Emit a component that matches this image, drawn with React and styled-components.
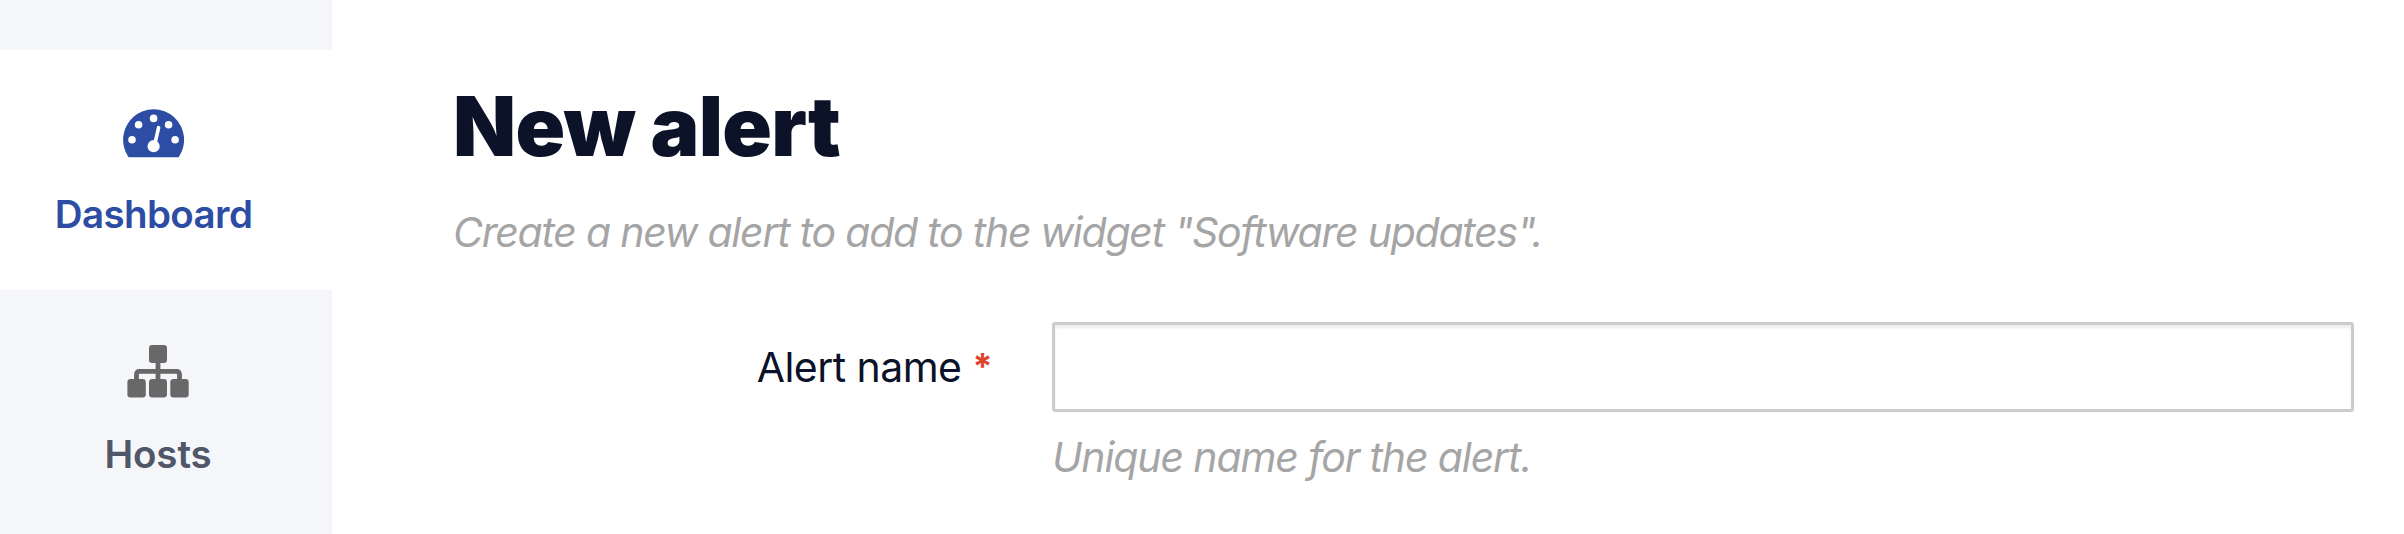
import React from "react";
import styled, { createGlobalStyle } from "styled-components";

const GlobalStyle = createGlobalStyle`
  *, *::before, *::after { box-sizing: border-box; }
  body { margin: 0; background: #fff; font-family: Inter, "Liberation Sans", sans-serif; }
`;

const Page = styled.div`
  display: flex;
  width: 2404px;
  height: 534px;
  overflow: hidden;
`;

const Sidebar = styled.nav`
  display: flex;
  flex: 0 0 332px;
  flex-direction: column;
  padding-top: 50px;
  background: #f4f6fa;
`;

const NavItem = styled.a`
  display: flex;
  flex: 0 0 240px;
  flex-direction: column;
  align-items: center;
  padding: ${(p) => (p.$active ? "59px 25px 0 0" : "55px 16px 0 0")};
  gap: 32px;
  background: ${(p) => (p.$active ? "#fff" : "transparent")};
  color: ${(p) => (p.$active ? "#2d4ca3" : "#505768")};
`;

const NavIcon = styled.svg`
  display: block;
  flex: none;
`;

const NavLabel = styled.span`
  font-size: 38.5px;
  font-weight: 600;
  line-height: 48px;
  letter-spacing: ${(p) => p.$tracking};
  white-space: nowrap;
`;

const Main = styled.main`
  flex: 1;
  padding: 79px 50px 0 121px;
`;

const Title = styled.h1`
  margin: 0;
  color: #0c1228;
  font-size: 82px;
  font-weight: 900;
  line-height: 96px;
  letter-spacing: -0.7px;
`;

const Description = styled.p`
  margin: 33px 0 0;
  color: #a5a5a5;
  font-size: 41px;
  font-style: italic;
  line-height: 48px;
  letter-spacing: -1.24px;
  white-space: nowrap;
`;

const Field = styled.div`
  display: grid;
  grid-template-columns: 539px 1302px;
  column-gap: 60px;
  margin-top: 66px;
`;

const Label = styled.label`
  padding-top: 20px;
  color: #0c1228;
  font-size: 41px;
  line-height: 50px;
  letter-spacing: -0.55px;
  text-align: right;
  white-space: nowrap;
`;

const Required = styled.span`
  color: #e0432d;
  font-size: 36px;
  font-weight: 700;
  line-height: 1;
  vertical-align: 3px;
`;

const Input = styled.input`
  display: block;
  width: 1302px;
  height: 90px;
  padding: 0 20px;
  border: 3px solid #ccc;
  border-radius: 3px;
  outline: none;
  background: #fff;
  box-shadow: inset 0 3px 3px rgba(0, 0, 0, 0.075);
  font: 41px Inter, sans-serif;
`;

const Hint = styled.p`
  margin: 15px 0 0;
  color: #a5a5a5;
  font-size: 41px;
  font-style: italic;
  line-height: 60px;
  letter-spacing: -1.12px;
  white-space: nowrap;
`;

const DashboardIcon = () => (
  <NavIcon width="62" height="49" viewBox="0 0 62 49" fill="currentColor">
    <path d="M5.6 48.3a30.5 30.5 0 1 1 50 0Z" />
    <g fill="#fff">
      <circle cx="9" cy="30.7" r="3.8" />
      <circle cx="15.6" cy="15.8" r="3.8" />
      <circle cx="30.6" cy="9.4" r="3.8" />
      <circle cx="45.6" cy="15.8" r="3.8" />
      <circle cx="52.1" cy="30.7" r="3.8" />
      <circle cx="30.6" cy="37.2" r="6.1" />
    </g>
    <path d="M31.6 36 35.6 18.7" stroke="#fff" strokeWidth="3.6" strokeLinecap="round" />
  </NavIcon>
);

const HostsIcon = () => (
  <NavIcon width="62" height="53" viewBox="0 0 62 53" fill="#686868">
    <rect x="22" y="0" width="18" height="18" rx="3.2" />
    <rect x="0.4" y="34.1" width="18.4" height="18.4" rx="3.2" />
    <rect x="22" y="34.1" width="18" height="18.4" rx="3.2" />
    <rect x="43.3" y="34.1" width="18.4" height="18.4" rx="3.2" />
    <path
      d="M31 16V36M9.5 36V29.5Q9.5 26.3 12.7 26.3H49.3Q52.5 26.3 52.5 29.5V36"
      fill="none"
      stroke="#686868"
      strokeWidth="4.8"
    />
  </NavIcon>
);

export default function App() {
  return (
    <>
      <GlobalStyle />
      <Page>
        <Sidebar>
          <NavItem $active>
            <DashboardIcon />
            <NavLabel $tracking="-0.6px">Dashboard</NavLabel>
          </NavItem>
          <NavItem>
            <HostsIcon />
            <NavLabel $tracking="-0.1px">Hosts</NavLabel>
          </NavItem>
        </Sidebar>
        <Main>
          <Title>New alert</Title>
          <Description>Create a new alert to add to the widget "Software updates".</Description>
          <Field>
            <Label htmlFor="alert-name">
              Alert name <Required>*</Required>
            </Label>
            <div>
              <Input id="alert-name" />
              <Hint>Unique name for the alert.</Hint>
            </div>
          </Field>
        </Main>
      </Page>
    </>
  );
}
